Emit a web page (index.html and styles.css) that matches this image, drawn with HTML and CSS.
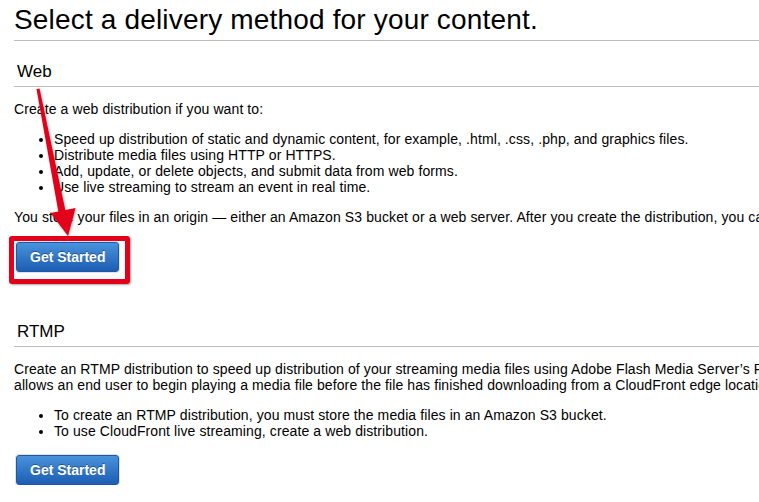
FILE: index.html
```html
<!DOCTYPE html>
<html lang="en">
<head>
    <meta charset="UTF-8">
    <title>Select a delivery method</title>
    <link rel="stylesheet" href="styles.css">
</head>
<body>
    <div class="page">
        <h1 class="title">Select a delivery method for your content.</h1>

        <div class="method">
            <h2 class="method-name">Web</h2>
            <p>Create a web distribution if you want to:</p>
            <ul class="points">
                <li>Speed up distribution of static and dynamic content, for example, .html, .css, .php, and graphics files.</li>
                <li>Distribute media files using HTTP or HTTPS.</li>
                <li>Add, update, or delete objects, and submit data from web forms.</li>
                <li>Use live streaming to stream an event in real time.</li>
            </ul>
            <p>You store your files in an origin &mdash; either an Amazon S3 bucket or a web server. After you create the distribution, you can add more origins to the distribution.</p>
            <div class="actions">
                <button class="btn-start">Get Started</button>
            </div>
        </div>

        <div class="method method-rtmp">
            <h2 class="method-name">RTMP</h2>
            <p>Create an RTMP distribution to speed up distribution of your streaming media files using Adobe Flash Media Server&rsquo;s RTMP protocol. An RTMP distribution<br>allows an end user to begin playing a media file before the file has finished downloading from a CloudFront edge location. Note the following:</p>
            <ul class="points">
                <li>To create an RTMP distribution, you must store the media files in an Amazon S3 bucket.</li>
                <li>To use CloudFront live streaming, create a web distribution.</li>
            </ul>
            <div class="actions">
                <button class="btn-start">Get Started</button>
            </div>
        </div>

        <!-- annotation drawn over the screenshot -->
        <div class="mark-box"></div>
        <svg class="mark-arrow" width="140" height="290" viewBox="0 0 140 290">
            <polygon points="36.5,85 39.5,84.6 65.5,207 58.5,208.4" fill="#e3001b"/>
            <polygon points="50.5,209 75.5,204 68,232" fill="#e3001b"/>
        </svg>
    </div>
</body>
</html>
```

FILE: styles.css
```css
body{
    margin: 0;
    overflow: hidden;
    background: #ffffff;
    font-family: "Liberation Sans", Arial, Helvetica, sans-serif;
    color: #000000;
}
.page{
    position: relative;
    width: 1100px;
    padding-left: 14px;
}
.title{
    margin: 4px 0 0 0;
    font-size: 28px;
    font-weight: normal;
    letter-spacing: 0.17px;
    line-height: 32px;
    padding-bottom: 4px;
    border-bottom: 1px solid #bcbcbc;
}
.method-name{
    margin: 21px 0 0 0;
    padding: 0 0 4px 3px;
    font-size: 17px;
    font-weight: normal;
    line-height: 20px;
    border-bottom: 1px solid #bcbcbc;
}
.method p{
    margin: 14px 0;
    font-size: 14px;
    line-height: 16px;
    letter-spacing: 0.1px;
    white-space: nowrap;
}
.points{
    margin: 14px 0;
    padding-left: 40px;
    font-size: 14px;
    line-height: 16px;
    letter-spacing: 0.1px;
    white-space: nowrap;
}
.actions{
    padding-top: 3px;
}
.method-rtmp{
    margin-top: 50px;
}
.method-rtmp .actions{
    padding-top: 2px;
}
.btn-start{
    margin-left: 2px;
    height: 30px;
    padding: 0 13px;
    border: 1px solid #1c58a3;
    border-radius: 3px;
    background: linear-gradient(#4893dd, #1d5db2);
    color: #ffffff;
    font-family: "Liberation Sans", Arial, sans-serif;
    font-size: 14px;
    font-weight: bold;
    text-shadow: 0 -1px 0 rgba(0,0,0,0.35);
    box-shadow: 0 0 0 1px rgba(0,0,0,0.12);
    cursor: pointer;
}
.mark-box{
    position: absolute;
    left: 9px;
    top: 232px;
    width: 111px;
    height: 38px;
    border: 5px solid #e3001b;
    border-radius: 3px;
    box-shadow: 1px 1px 2px rgba(0,0,0,0.35);
}
.mark-arrow{
    position: absolute;
    left: 0;
    top: 0;
    filter: drop-shadow(1px 1px 1px rgba(0,0,0,0.3));
}
```
